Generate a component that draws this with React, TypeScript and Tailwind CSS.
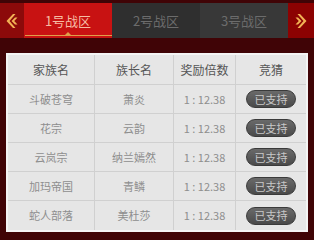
import React from 'react';

const rows = [
  { clan: '斗破苍穹', leader: '萧炎' },
  { clan: '花宗', leader: '云韵' },
  { clan: '云岚宗', leader: '纳兰嫣然' },
  { clan: '加玛帝国', leader: '青鳞' },
  { clan: '蛇人部落', leader: '美杜莎' },
];

function Arrow({ dir }: { dir: 'left' | 'right' }) {
  return (
    <svg width="12" height="16" viewBox="0 0 12 16" className={dir === 'right' ? 'rotate-180' : ''}>
      <path d="M7 1 L0.5 8 L7 15 L9.5 15 L3.5 8 L9.5 1 Z" fill="#f2b255" />
      <path d="M9 4.5 L5.5 8 L9 11.5 L11.5 11.5 L8.2 8 L11.5 4.5 Z" fill="#f2b255" />
    </svg>
  );
}

export default function App() {
  return (
    <div
      className="w-[314px] h-[240px] bg-[#400406] overflow-hidden"
      style={{ fontFamily: '"Noto Sans CJK SC", "Noto Sans", sans-serif' }}
    >
      {/* 战区タブ */}
      <div className="flex h-[35px] mt-[3px]">
        <div className="w-[24px] flex items-center justify-center bg-[#8c0a0a]">
          <Arrow dir="left" />
        </div>
        <div className="relative w-[88px] flex items-center justify-center bg-[#c81212] text-[13px] text-[#f6bca4]">
          1号战区
          <div className="absolute left-[1px] right-0 bottom-[2px] h-px bg-[#e0a04a]" />
          <div className="absolute left-1/2 -translate-x-1/2 bottom-[3px] w-0 h-0 border-l-[3px] border-r-[3px] border-b-[3px] border-l-transparent border-r-transparent border-b-[#e0a04a]" />
        </div>
        <div className="w-[88px] flex items-center justify-center bg-[#2f2f2f] text-[13px] text-[#6c6c6c]">
          2号战区
        </div>
        <div className="w-[88px] flex items-center justify-center bg-[#383838] text-[13px] text-[#6c6c6c]">
          3号战区
        </div>
        <div className="w-[26px] flex items-center justify-center bg-[#8c0202]">
          <Arrow dir="right" />
        </div>
      </div>

      {/* 表 */}
      <div className="mx-[6px] mt-[15px] border-2 border-[#f4f4f4] bg-[#e6e6e6]">
        <div className="grid grid-cols-[87px_79px_62px_1fr] h-[30px] border-b border-[#d0d0d0] text-[12px] text-[#555]">
          <div className="flex items-center justify-center border-r border-[#d0d0d0]">家族名</div>
          <div className="flex items-center justify-center border-r border-[#d0d0d0]">族长名</div>
          <div className="flex items-center justify-center border-r border-[#d0d0d0]">奖励倍数</div>
          <div className="flex items-center justify-center">竞猜</div>
        </div>
        {rows.map((r, i) => (
          <div
            key={r.clan}
            className={`grid grid-cols-[87px_79px_62px_1fr] h-[29px] text-[11px] text-[#8e8e8e] ${i < rows.length - 1 ? 'border-b border-[#d0d0d0]' : ''}`}
          >
            <div className="flex items-center justify-center border-r border-[#d0d0d0]">{r.clan}</div>
            <div className="flex items-center justify-center border-r border-[#d0d0d0]">{r.leader}</div>
            <div className="flex items-center justify-center border-r border-[#d0d0d0]">1 : 12.38</div>
            <div className="flex items-center justify-center">
              <div className="w-[50px] h-[18px] rounded-full border border-[#3a3a3a] bg-gradient-to-b from-[#6a6a6a] to-[#4a4a4a] flex items-center justify-center text-[11px] text-[#c8c8c8]">
                已支持
              </div>
            </div>
          </div>
        ))}
      </div>
    </div>
  );
}
